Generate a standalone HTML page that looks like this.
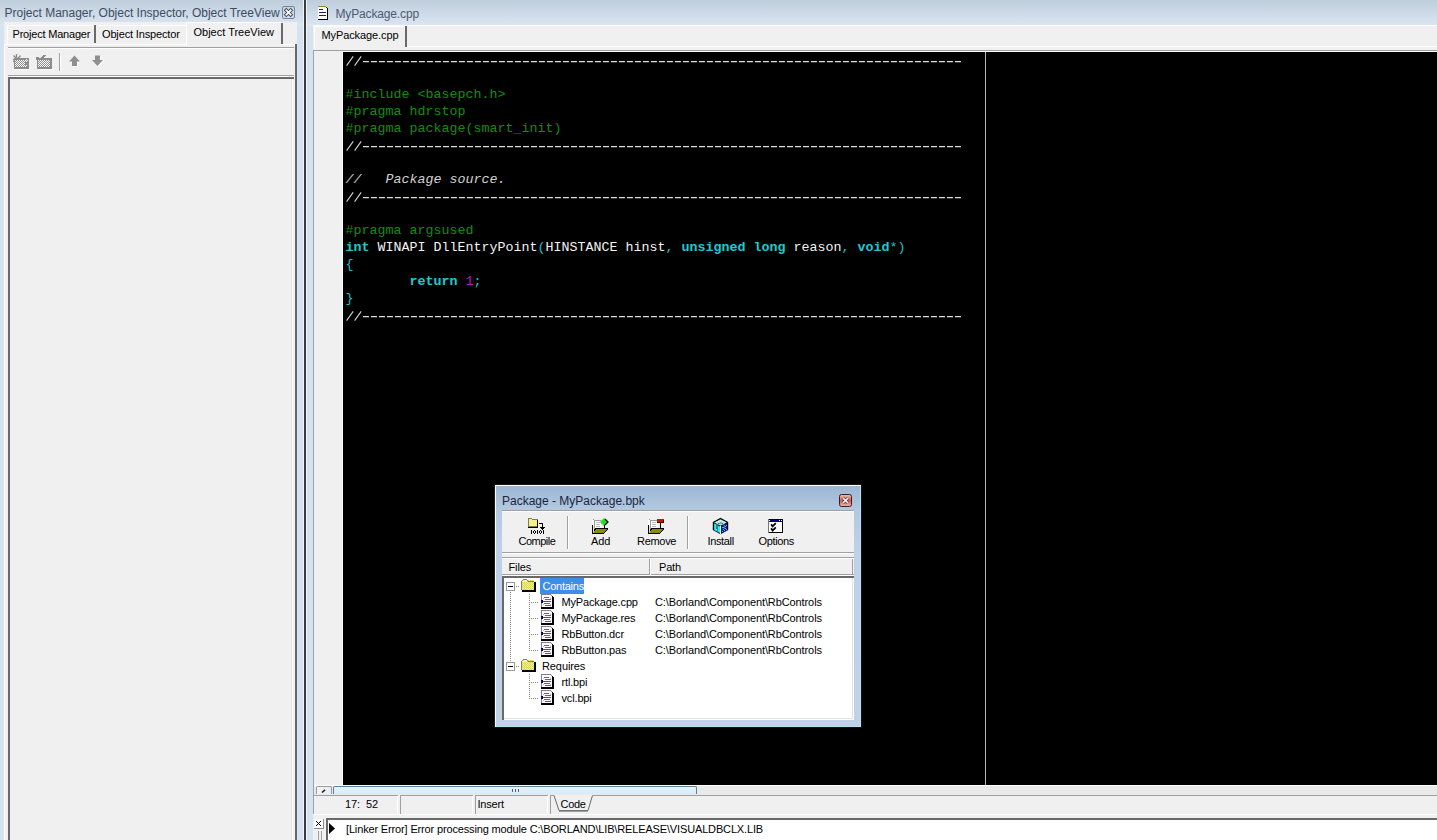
<!DOCTYPE html>
<html><head><meta charset="utf-8">
<style>
html,body{margin:0;padding:0}
body{width:1437px;height:840px;overflow:hidden;position:relative;background:#d5e2f0;font-family:"Liberation Sans",sans-serif;font-size:11px;color:#000}
.a{position:absolute}
svg.a{overflow:visible}
.t{position:absolute;white-space:pre;line-height:11px;height:11px}
.code{position:absolute;left:345.5px;top:52px;font-family:"Liberation Mono",monospace;font-size:13.333px;line-height:17px;white-space:pre;color:#c0c0c0}
.cm{font-style:italic;color:#d0d0d0}
.pp{color:#148c14}
.kw{color:#22c8d0;font-weight:bold}
.sy{color:#22c0c8}
.id{color:#f2f2f2}
.nm{color:#b020b8}
</style></head><body>
<div class="a" style="left:0px;top:0px;width:1437px;height:26px;background:linear-gradient(#bfcddc,#dbe6f2);"></div>
<div class="t" style="left:4.5px;top:7px;font-size:12px;line-height:12px;color:#3f4c61">Project Manager, Object Inspector, Object TreeView</div>
<svg class="a" style="left:282px;top:6px" width="13" height="13" viewBox="0 0 13 13">
<rect x="0.5" y="0.5" width="12" height="12" rx="1.5" fill="none" stroke="#76839a"/>
<path d="M4.3 4.3 L8.7 8.7 M8.7 4.3 L4.3 8.7" stroke="#3a4658" stroke-width="3.6" stroke-linecap="square"/>
<path d="M4.3 4.3 L8.7 8.7 M8.7 4.3 L4.3 8.7" stroke="#fff" stroke-width="1.7" stroke-linecap="square"/>
</svg>
<div class="a" style="left:4px;top:22px;width:293px;height:818px;background:#f0f0f0;"></div>
<div class="a" style="left:7px;top:25px;width:1px;height:19px;background:#fff;"></div>
<div class="a" style="left:7px;top:25px;width:88px;height:1px;background:#fff;"></div>
<div class="a" style="left:94px;top:25px;width:2px;height:18px;background:#696969;"></div>
<div class="t" style="left:12.5px;top:29px;letter-spacing:-0.2px">Project Manager</div>
<div class="a" style="left:98px;top:25px;width:88px;height:1px;background:#fff;"></div>
<div class="t" style="left:102px;top:29px;letter-spacing:-0.15px">Object Inspector</div>
<div class="a" style="left:186px;top:22px;width:1px;height:23px;background:#fff;"></div>
<div class="a" style="left:186px;top:22px;width:96px;height:1px;background:#fff;"></div>
<div class="a" style="left:281px;top:23px;width:2px;height:21px;background:#696969;"></div>
<div class="t" style="left:193.5px;top:27px;">Object TreeView</div>
<div class="a" style="left:4px;top:44px;width:182px;height:1px;background:#fff;"></div>
<div class="a" style="left:283px;top:44px;width:14px;height:1px;background:#fff;"></div>
<div class="a" style="left:4px;top:44px;width:1px;height:796px;background:#fff;"></div>
<div class="a" style="left:295px;top:44px;width:2px;height:796px;background:#696969;"></div>
<div class="a" style="left:8px;top:47px;width:286px;height:1px;background:#a0a0a0;"></div>
<div class="a" style="left:8px;top:48px;width:286px;height:1px;background:#fff;"></div>
<div class="a" style="left:8px;top:75px;width:286px;height:1px;background:#a0a0a0;"></div>
<div class="a" style="left:8px;top:76px;width:286px;height:1px;background:#fff;"></div>
<div class="a" style="left:59px;top:53px;width:1px;height:18px;background:#a0a0a0;"></div>
<div class="a" style="left:60px;top:53px;width:1px;height:18px;background:#fff;"></div>
<svg class="a" style="left:13px;top:54px" width="17" height="16" viewBox="0 0 17 16" shape-rendering="crispEdges">
<defs><pattern id="chk" width="2" height="2" patternUnits="userSpaceOnUse"><rect width="2" height="2" fill="#8c8c8c"/><rect x="0" y="0" width="1" height="1" fill="#fff"/><rect x="1" y="1" width="1" height="1" fill="#fff"/></pattern></defs>
<rect x="1" y="4" width="15" height="11" fill="#8c8c8c"/>
<rect x="2" y="6" width="10" height="7" fill="url(#chk)"/>
<rect x="12" y="5" width="3" height="3" fill="url(#chk)"/>
<rect x="13" y="11" width="1" height="1" fill="#fff"/><rect x="12" y="12" width="1" height="1" fill="#fff"/>
<path d="M0.5 1.5 L4 5 M7.5 1.5 L4.5 5 M3.5 0 V4 M0 5.5 H3 M0 7.5 H2" stroke="#8c8c8c" stroke-width="1.3" shape-rendering="auto"/>
<rect x="2" y="15" width="15" height="1" fill="#fff"/>
</svg>
<svg class="a" style="left:36px;top:54px" width="17" height="16" viewBox="0 0 17 16" shape-rendering="crispEdges">
<rect x="1" y="4" width="15" height="11" fill="#8c8c8c"/>
<rect x="2" y="6" width="12" height="7" fill="url(#chk)"/>
<rect x="0" y="3" width="3" height="3" fill="#8c8c8c"/>
<path d="M4 4l3-3h3l-3 3z" fill="#8c8c8c"/>
<rect x="2" y="15" width="15" height="1" fill="#fff"/>
</svg>
<svg class="a" style="left:68px;top:55px" width="14" height="13" viewBox="0 0 14 13">
<path d="M2 7.5 L7.5 1.5 L13 7.5 H10 V12 H5 V7.5 Z" fill="#fff"/>
<path d="M1 6.5 L6.5 0.5 L12 6.5 H9 V11 H4 V6.5 Z" fill="#8f8f8f"/>
</svg>
<svg class="a" style="left:91px;top:55px" width="14" height="13" viewBox="0 0 14 13">
<path d="M5 1.5 H10 V6 H13 L7.5 12 L2 6 H5 Z" fill="#fff"/>
<path d="M4 0.5 H9 V5 H12 L6.5 11 L1 5 H4 Z" fill="#8f8f8f"/>
</svg>
<div class="a" style="left:8px;top:77px;width:286px;height:2px;background:#696969;"></div>
<div class="a" style="left:8px;top:77px;width:2px;height:763px;background:#696969;"></div>
<div class="a" style="left:292px;top:79px;width:1px;height:761px;background:#fff;"></div>
<div class="a" style="left:291px;top:79px;width:1px;height:761px;background:#e3e3e3;"></div>
<div class="a" style="left:297px;top:26px;width:6px;height:814px;background:#d5e2f0;"></div>
<div class="a" style="left:303px;top:0px;width:1px;height:840px;background:#eef4fa;"></div>
<div class="a" style="left:304px;top:0px;width:2px;height:840px;background:#3c3c3c;"></div>
<div class="a" style="left:306px;top:0px;width:1px;height:840px;background:#eef4fa;"></div>
<svg class="a" style="left:318px;top:6px" width="11" height="15" viewBox="0 0 11 15" shape-rendering="crispEdges">
<rect x="0" y="0" width="9" height="13" fill="#fff"/>
<rect x="0" y="0" width="8" height="1" fill="#8a8a3a"/>
<rect x="8" y="1" width="1" height="1" fill="#000"/>
<rect x="9" y="2" width="1" height="12" fill="#000"/>
<rect x="0" y="13" width="10" height="1" fill="#000"/>
<rect x="1" y="3" width="4" height="1" fill="#1a1a70"/>
<rect x="1" y="6" width="7" height="1" fill="#1a1a70"/>
<rect x="1" y="9" width="7" height="1" fill="#1a1a70"/>
</svg>
<div class="t" style="left:335.5px;top:8px;font-size:12px;line-height:12px;color:#4d5a70;letter-spacing:-0.15px">MyPackage.cpp</div>
<div class="a" style="left:313px;top:25px;width:1124px;height:25px;background:#f0f0f0;"></div>
<div class="a" style="left:313px;top:25px;width:1124px;height:1px;background:#fbfcfd;"></div>
<div class="a" style="left:314px;top:26px;width:1px;height:22px;background:#fff;"></div>
<div class="a" style="left:314px;top:26px;width:91px;height:1px;background:#fff;"></div>
<div class="a" style="left:405px;top:26px;width:2px;height:21px;background:#696969;"></div>
<div class="a" style="left:407px;top:46px;width:1030px;height:1px;background:#fff;"></div>
<div class="t" style="left:321.5px;top:30px;letter-spacing:-0.1px">MyPackage.cpp</div>
<div class="a" style="left:313px;top:50px;width:1124px;height:1px;background:#a0a0a0;"></div>
<div class="a" style="left:313px;top:50px;width:1px;height:745px;background:#a0a0a0;"></div>
<div class="a" style="left:314px;top:51px;width:28px;height:734px;background:#f0f0f0;"></div>
<div class="a" style="left:342px;top:51px;width:1px;height:734px;background:#fff;"></div>
<div class="a" style="left:343px;top:51px;width:1094px;height:1px;background:#fff;"></div>
<div class="a" style="left:343px;top:52px;width:1094px;height:733px;background:#000;"></div>
<div class="a" style="left:985px;top:52px;width:1px;height:733px;background:#b4b4b4;"></div>
<div class="a" style="left:363px;top:61px;width:600px;height:1px;background:repeating-linear-gradient(90deg,#dcdcdc 0 6px,transparent 6px 8px)"></div>
<div class="a" style="left:363px;top:62px;width:600px;height:1px;background:repeating-linear-gradient(90deg,rgba(160,160,160,0.35) 0 6px,transparent 6px 8px)"></div>
<svg class="a" style="left:344px;top:55px" width="20" height="12" viewBox="0 0 20 12"><path d="M2.6 10.6 L9.2 1.4 M10.6 10.6 L17.2 1.4" stroke="#cfcfcf" stroke-width="1.15" fill="none"/></svg>
<div class="a" style="left:363px;top:146px;width:600px;height:1px;background:repeating-linear-gradient(90deg,#dcdcdc 0 6px,transparent 6px 8px)"></div>
<div class="a" style="left:363px;top:147px;width:600px;height:1px;background:repeating-linear-gradient(90deg,rgba(160,160,160,0.35) 0 6px,transparent 6px 8px)"></div>
<svg class="a" style="left:344px;top:140px" width="20" height="12" viewBox="0 0 20 12"><path d="M2.6 10.6 L9.2 1.4 M10.6 10.6 L17.2 1.4" stroke="#cfcfcf" stroke-width="1.15" fill="none"/></svg>
<div class="a" style="left:363px;top:197px;width:600px;height:1px;background:repeating-linear-gradient(90deg,#dcdcdc 0 6px,transparent 6px 8px)"></div>
<div class="a" style="left:363px;top:198px;width:600px;height:1px;background:repeating-linear-gradient(90deg,rgba(160,160,160,0.35) 0 6px,transparent 6px 8px)"></div>
<svg class="a" style="left:344px;top:191px" width="20" height="12" viewBox="0 0 20 12"><path d="M2.6 10.6 L9.2 1.4 M10.6 10.6 L17.2 1.4" stroke="#cfcfcf" stroke-width="1.15" fill="none"/></svg>
<div class="a" style="left:363px;top:316px;width:600px;height:1px;background:repeating-linear-gradient(90deg,#dcdcdc 0 6px,transparent 6px 8px)"></div>
<div class="a" style="left:363px;top:317px;width:600px;height:1px;background:repeating-linear-gradient(90deg,rgba(160,160,160,0.35) 0 6px,transparent 6px 8px)"></div>
<svg class="a" style="left:344px;top:310px" width="20" height="12" viewBox="0 0 20 12"><path d="M2.6 10.6 L9.2 1.4 M10.6 10.6 L17.2 1.4" stroke="#cfcfcf" stroke-width="1.15" fill="none"/></svg>
<div class="code"><span class="cm"></span>

<span class="pp">#include &lt;basepch.h&gt;</span>
<span class="pp">#pragma hdrstop</span>
<span class="pp">#pragma package(smart_init)</span>
<span class="cm"></span>

<span class="cm">//   Package source.</span>
<span class="cm"></span>

<span class="pp">#pragma argsused</span>
<span class="kw">int</span><span class="id"> WINAPI DllEntryPoint</span><span class="sy">(</span><span class="id">HINSTANCE hinst</span><span class="sy">, </span><span class="kw">unsigned long</span><span class="id"> reason</span><span class="sy">, </span><span class="kw">void</span><span class="sy">*)</span>
<span class="sy">{</span>
        <span class="kw">return</span> <span class="nm">1</span><span class="sy">;</span>
<span class="sy">}</span>
<span class="cm"></span>
</div>
<div class="a" style="left:314px;top:785px;width:1123px;height:1px;background:#fff;"></div>
<div class="a" style="left:314px;top:786px;width:1123px;height:9px;background:#e9e9e9;"></div>
<div class="a" style="left:316px;top:786px;width:16px;height:8px;border:1px solid #9a9a9a;border-bottom:none;border-radius:2px 2px 0 0;box-sizing:border-box;background:linear-gradient(90deg,#f2f2f2,#e6eef4)"></div>
<svg class="a" style="left:321px;top:789px" width="5" height="4"><path d="M1 3.5 L4 0.8" stroke="#222" stroke-width="1.6"/></svg>
<div class="a" style="left:333px;top:786px;width:364px;height:8px;border:1px solid #5f7f97;border-bottom:none;border-radius:2px 2px 0 0;box-sizing:border-box;background:linear-gradient(#e6f4fc,#d6ebf8)"></div>
<svg class="a" style="left:512px;top:789px" width="7" height="3" shape-rendering="crispEdges"><rect x="0" y="0" width="1" height="3" fill="#3a6a9a"/><rect x="3" y="0" width="1" height="3" fill="#3a6a9a"/><rect x="6" y="0" width="1" height="3" fill="#3a6a9a"/></svg>
<div class="a" style="left:313px;top:795px;width:1124px;height:23px;background:#f0f0f0;"></div>
<div class="a" style="left:313px;top:814px;width:1124px;height:1px;background:#fff;"></div>
<div class="a" style="left:313px;top:795px;width:85px;height:1px;background:#a0a0a0;"></div>
<div class="a" style="left:313px;top:795px;width:1px;height:19px;background:#a0a0a0;"></div>
<div class="a" style="left:397px;top:796px;width:1px;height:19px;background:#fff;"></div>
<div class="a" style="left:313px;top:814px;width:85px;height:1px;background:#fff;"></div>
<div class="a" style="left:400px;top:795px;width:73px;height:1px;background:#a0a0a0;"></div>
<div class="a" style="left:400px;top:795px;width:1px;height:19px;background:#a0a0a0;"></div>
<div class="a" style="left:472px;top:796px;width:1px;height:19px;background:#fff;"></div>
<div class="a" style="left:400px;top:814px;width:73px;height:1px;background:#fff;"></div>
<div class="a" style="left:475px;top:795px;width:73px;height:1px;background:#a0a0a0;"></div>
<div class="a" style="left:475px;top:795px;width:1px;height:19px;background:#a0a0a0;"></div>
<div class="a" style="left:547px;top:796px;width:1px;height:19px;background:#fff;"></div>
<div class="a" style="left:475px;top:814px;width:73px;height:1px;background:#fff;"></div>
<div class="a" style="left:398px;top:796px;width:2px;height:18px;background:#f0f0f0;"></div>
<div class="t" style="left:345px;top:799px;letter-spacing:-0.1px">17:  52</div>
<div class="t" style="left:477.5px;top:799px;letter-spacing:-0.2px">Insert</div>
<div class="a" style="left:550px;top:795px;width:1px;height:19px;background:#a0a0a0;"></div>
<svg class="a" style="left:550px;top:795px" width="887" height="20" viewBox="0 0 887 20">
<path d="M0.5 19 V0.5 H4" stroke="#a0a0a0" fill="none"/>
<path d="M4 0.5 L9 15.5 H38 L42.5 0.5" stroke="#6a6a6a" stroke-width="1" fill="#f0f0f0"/>
<path d="M9 16 H38" stroke="#7a7a7a" stroke-width="1.4"/>
<path d="M42 0.5 H887" stroke="#a0a0a0"/>
</svg>
<div class="t" style="left:560.5px;top:799px;letter-spacing:-0.3px">Code</div>
<div class="a" style="left:313px;top:815px;width:1124px;height:25px;background:#f0f0f0;"></div>
<div class="a" style="left:326px;top:818px;width:1111px;height:2px;background:#696969;"></div>
<div class="a" style="left:326px;top:818px;width:2px;height:22px;background:#696969;"></div>
<div class="a" style="left:328px;top:820px;width:1109px;height:20px;background:#fff;"></div>
<svg class="a" style="left:314px;top:819px" width="11" height="21" viewBox="0 0 11 21" shape-rendering="crispEdges">
<rect x="0" y="0" width="9" height="9" fill="#fff"/>
<rect x="9" y="0" width="1" height="10" fill="#8a8a8a"/>
<rect x="0" y="9" width="10" height="1" fill="#8a8a8a"/>
<path d="M2 2 L7 7 M7 2 L2 7" stroke="#000" stroke-width="1" shape-rendering="auto"/>
<rect x="4" y="12" width="1" height="9" fill="#a0a0a0"/>
<rect x="7" y="12" width="1" height="9" fill="#a0a0a0"/>
</svg>
<svg class="a" style="left:329px;top:823px" width="7" height="11"><path d="M0 0 L6 5.5 L0 11 Z" fill="#000"/></svg>
<div class="t" style="left:346px;top:824px;letter-spacing:-0.15px">[Linker Error] Error processing module C:\BORLAND\LIB\RELEASE\VISUALDBCLX.LIB</div>
<div class="a" style="left:494px;top:484px;width:368px;height:244px;background:#1a1a1a;"></div>
<div class="a" style="left:495px;top:485px;width:366px;height:242px;background:#fff;"></div>
<div class="a" style="left:496px;top:486px;width:364px;height:240px;background:linear-gradient(#9cb6d4 0px,#b3c9e1 24px,#bcd1e8 60px,#c0d2e8 100%);"></div>
<div class="a" style="left:496px;top:726px;width:365px;height:1px;background:#b8e0f0;"></div>
<div class="a" style="left:860px;top:486px;width:1px;height:241px;background:#b8e0f0;"></div>
<div class="a" style="left:861px;top:484px;width:1px;height:244px;background:#0a1418;"></div>
<div class="a" style="left:494px;top:727px;width:368px;height:1px;background:#0a1418;"></div>
<div class="t" style="left:502px;top:495px;font-size:12px;line-height:12px;color:#1b263c">Package - MyPackage.bpk</div>
<svg class="a" style="left:839px;top:494px" width="13" height="13" viewBox="0 0 13 13">
<defs><linearGradient id="cg" x1="0" y1="0" x2="0" y2="1"><stop offset="0" stop-color="#f2c0b8"/><stop offset="0.5" stop-color="#c8604e"/><stop offset="1" stop-color="#f0b8b0"/></linearGradient></defs>
<rect x="0.5" y="0.5" width="12" height="12" rx="2" fill="url(#cg)" stroke="#3a1c22"/>
<path d="M4.2 4.2 L8.8 8.8 M8.8 4.2 L4.2 8.8" stroke="#5a2a2a" stroke-width="3"/>
<path d="M4.2 4.2 L8.8 8.8 M8.8 4.2 L4.2 8.8" stroke="#fff" stroke-width="1.6"/>
</svg>
<div class="a" style="left:502px;top:510px;width:352px;height:48px;background:#f0f0f0;"></div>
<div class="a" style="left:502px;top:510px;width:352px;height:1px;background:#a0a0a0;"></div>
<div class="a" style="left:502px;top:511px;width:352px;height:1px;background:#fff;"></div>
<div class="a" style="left:502px;top:552px;width:352px;height:1px;background:#a0a0a0;"></div>
<div class="a" style="left:502px;top:553px;width:352px;height:1px;background:#fff;"></div>
<div class="a" style="left:502px;top:557px;width:352px;height:1px;background:#a0a0a0;"></div>
<div class="a" style="left:567px;top:516px;width:1px;height:33px;background:#a0a0a0;"></div>
<div class="a" style="left:568px;top:516px;width:1px;height:33px;background:#fff;"></div>
<div class="a" style="left:687px;top:516px;width:1px;height:33px;background:#a0a0a0;"></div>
<div class="a" style="left:688px;top:516px;width:1px;height:33px;background:#fff;"></div>
<div class="t" style="left:518.5px;top:536px;letter-spacing:-0.5px">Compile</div>
<div class="t" style="left:591px;top:536px;letter-spacing:-0.1px">Add</div>
<div class="t" style="left:637px;top:536px;letter-spacing:-0.3px">Remove</div>
<div class="t" style="left:707.5px;top:536px;letter-spacing:-0.35px">Install</div>
<div class="t" style="left:758.5px;top:536px;letter-spacing:-0.35px">Options</div>
<svg class="a" style="left:527px;top:517px" width="19" height="19" viewBox="0 0 19 19" shape-rendering="crispEdges">
<rect x="1" y="1" width="4" height="1" fill="#808040"/>
<rect x="1" y="2" width="10" height="8" fill="#808040"/>
<rect x="2" y="3" width="8" height="6" fill="#f2f28a"/>
<rect x="2" y="2" width="3" height="1" fill="#f2f28a"/>
<rect x="1" y="10" width="10" height="1" fill="#000"/>
<rect x="10" y="3" width="1" height="8" fill="#000"/>
<rect x="12" y="6" width="4" height="1" fill="#000"/>
<rect x="15" y="6" width="1" height="5" fill="#000"/>
<rect x="13" y="10" width="5" height="1" fill="#000"/>
<rect x="14" y="11" width="3" height="1" fill="#000"/>
<rect x="15" y="12" width="1" height="1" fill="#000"/>
<rect x="4" y="13" width="1.4" height="4" fill="#000"/><rect x="10" y="13" width="1.4" height="4" fill="#000"/><rect x="16" y="13" width="1.4" height="4" fill="#000"/><rect x="6" y="14" width="1" height="2" fill="#000"/><rect x="8" y="14" width="1" height="2" fill="#000"/><rect x="7" y="13" width="1" height="1" fill="#000"/><rect x="7" y="16" width="1" height="1" fill="#000"/><rect x="12" y="14" width="1" height="2" fill="#000"/><rect x="14" y="14" width="1" height="2" fill="#000"/><rect x="13" y="13" width="1" height="1" fill="#000"/><rect x="13" y="16" width="1" height="1" fill="#000"/>
</svg>
<svg class="a" style="left:588px;top:514px" width="22" height="21" viewBox="0 0 22 21" shape-rendering="crispEdges"><rect x="4" y="6" width="6" height="7" fill="#fff"/>
<rect x="5" y="5" width="1" height="1" fill="#999"/>
<rect x="6" y="6" width="7" height="1" fill="#999"/>
<rect x="6" y="6" width="1" height="9" fill="#999"/>
<rect x="7" y="7" width="6" height="7" fill="#fff"/>
<rect x="8" y="8" width="4" height="1" fill="#c0c0c0"/>
<rect x="8" y="10" width="4" height="1" fill="#c0c0c0"/>
<rect x="8" y="12" width="4" height="1" fill="#c0c0c0"/>
<path d="M4 11 H5 V19 H4 Z" fill="#000"/>
<path d="M5 11.5 H6 V18 H5 Z" fill="#f0f0b0"/>
<path d="M8 14 H20 V15 H8 Z" fill="#000"/>
<path d="M7 15 L20 15 L15.5 19.5 L5 19.5 Z" fill="#8c8c00" shape-rendering="auto"/>
<path d="M20 14 V16 L15.5 20 H4 V19 H15 L19 15 V14 Z" fill="#000"/>
<path d="M6 15 L8 14 V15 L6 17 Z" fill="#000"/>
<path d="M16 4 L20 8 L16 12 L12 8 Z" fill="#22e022" shape-rendering="auto"/>
<path d="M17 5 L20 8 L17 11" stroke="#000" fill="none" stroke-width="1.2" shape-rendering="auto"/>
<rect x="16" y="11" width="1" height="3" fill="#000"/>
</svg>
<svg class="a" style="left:644px;top:514px" width="22" height="21" viewBox="0 0 22 21" shape-rendering="crispEdges"><rect x="4" y="6" width="6" height="7" fill="#fff"/>
<rect x="5" y="5" width="1" height="1" fill="#999"/>
<rect x="6" y="6" width="7" height="1" fill="#999"/>
<rect x="6" y="6" width="1" height="9" fill="#999"/>
<rect x="7" y="7" width="6" height="7" fill="#fff"/>
<rect x="8" y="8" width="4" height="1" fill="#c0c0c0"/>
<rect x="8" y="10" width="4" height="1" fill="#c0c0c0"/>
<rect x="8" y="12" width="4" height="1" fill="#c0c0c0"/>
<path d="M4 11 H5 V19 H4 Z" fill="#000"/>
<path d="M5 11.5 H6 V18 H5 Z" fill="#f0f0b0"/>
<path d="M8 14 H20 V15 H8 Z" fill="#000"/>
<path d="M7 15 L20 15 L15.5 19.5 L5 19.5 Z" fill="#8c8c00" shape-rendering="auto"/>
<path d="M20 14 V16 L15.5 20 H4 V19 H15 L19 15 V14 Z" fill="#000"/>
<path d="M6 15 L8 14 V15 L6 17 Z" fill="#000"/>
<rect x="13" y="5" width="7" height="3" rx="1" fill="#cc1010"/>
<rect x="13" y="8" width="7" height="1" fill="#500"/>
<rect x="19" y="6" width="1" height="2" fill="#300"/>
<rect x="16" y="9" width="1" height="5" fill="#000"/>
</svg>
<svg class="a" style="left:712px;top:517px" width="17" height="18" viewBox="0 0 17 18">
<path d="M8.5 0.8 L16.2 4.9 V13.1 L8.5 17.2 L0.8 13.1 V4.9 Z" fill="#000"/>
<path d="M8.5 2.2 L14.8 5.5 L8.5 8.8 L2.2 5.5 Z" fill="#9eeef0"/>
<path d="M2.1 6.3 L8 9.4 V16 L2.1 12.9 Z" fill="#22eef8"/>
<path d="M9 9.4 L14.9 6.3 V12.9 L9 16 Z" fill="#0c1ea8"/>
<g shape-rendering="crispEdges"><rect x="10" y="10" width="1" height="1" fill="#60b0ff"/><rect x="12" y="9" width="1" height="1" fill="#60b0ff"/><rect x="14" y="8" width="1" height="1" fill="#60b0ff"/><rect x="11" y="12" width="1" height="1" fill="#60b0ff"/><rect x="13" y="11" width="1" height="1" fill="#60b0ff"/><rect x="10" y="14" width="1" height="1" fill="#60b0ff"/><rect x="12" y="13" width="1" height="1" fill="#60b0ff"/><rect x="14" y="12" width="1" height="1" fill="#60b0ff"/><rect x="11" y="10" width="1" height="1" fill="#60b0ff"/><rect x="13" y="9" width="1" height="1" fill="#60b0ff"/><rect x="6" y="4" width="1" height="1" fill="#ffffff"/><rect x="8" y="3" width="1" height="1" fill="#ffffff"/><rect x="10" y="4" width="1" height="1" fill="#ffffff"/><rect x="12" y="5" width="1" height="1" fill="#ffffff"/><rect x="5" y="6" width="1" height="1" fill="#ffffff"/><rect x="7" y="5" width="1" height="1" fill="#ffffff"/><rect x="9" y="6" width="1" height="1" fill="#ffffff"/><rect x="11" y="6" width="1" height="1" fill="#ffffff"/><rect x="4" y="5" width="1" height="1" fill="#ffffff"/>
<rect x="8" y="9" width="1" height="8" fill="#d8ffff"/>
<rect x="5" y="8" width="1" height="7" fill="#108c94"/>
</g>
<path d="M4.6 12 V8.2 Q8.5 3.8 12.4 8.2 V12" stroke="#8c5a62" stroke-width="1.1" fill="none"/>
</svg>
<svg class="a" style="left:768px;top:519px" width="16" height="15" viewBox="0 0 16 15" shape-rendering="crispEdges">
<rect x="0" y="0" width="15" height="14" fill="#000"/>
<rect x="0" y="0" width="1" height="14" fill="#777"/>
<rect x="1" y="1" width="13" height="2" fill="#000080"/>
<rect x="1" y="1" width="1" height="1" fill="#fff"/>
<rect x="11" y="1" width="1" height="1" fill="#fff"/>
<rect x="13" y="1" width="1" height="1" fill="#fff"/>
<rect x="1" y="3" width="13" height="10" fill="#fff"/>
<path d="M3.2 5.3 L4.6 7.4 L7.8 4.2 M3.2 9.3 L4.6 11.6 L7.8 8.3" stroke="#000" stroke-width="1.8" fill="none" shape-rendering="auto"/>
</svg>
<div class="a" style="left:502px;top:558px;width:352px;height:19px;background:#f0f0f0;"></div>
<div class="a" style="left:502px;top:558px;width:352px;height:1px;background:#fff;"></div>
<div class="a" style="left:502px;top:574px;width:352px;height:1px;background:#a0a0a0;"></div>
<div class="a" style="left:502px;top:575px;width:352px;height:1px;background:#fff;"></div>
<div class="a" style="left:649px;top:559px;width:1px;height:16px;background:#a0a0a0;"></div>
<div class="a" style="left:650px;top:559px;width:1px;height:16px;background:#fff;"></div>
<div class="a" style="left:852px;top:559px;width:1px;height:16px;background:#a0a0a0;"></div>
<div class="t" style="left:508.5px;top:562px;letter-spacing:-0.1px">Files</div>
<div class="t" style="left:659px;top:562px;letter-spacing:-0.2px">Path</div>
<div class="a" style="left:502px;top:576px;width:352px;height:2px;background:#696969;"></div>
<div class="a" style="left:502px;top:576px;width:2px;height:144px;background:#696969;"></div>
<div class="a" style="left:504px;top:578px;width:350px;height:142px;background:#fff;"></div>
<div class="a" style="left:852px;top:578px;width:1px;height:141px;background:#e2e2e2;"></div>
<div class="a" style="left:504px;top:718px;width:349px;height:1px;background:#e2e2e2;"></div>
<div class="a" style="left:540px;top:578px;width:44px;height:16px;background:#3d8ee8;"></div>
<div class="t" style="left:542.5px;top:581px;color:#fff;letter-spacing:-0.25px">Contains</div>
<div class="t" style="left:561.5px;top:597px;letter-spacing:-0.15px">MyPackage.cpp</div>
<div class="t" style="left:655px;top:597px;letter-spacing:-0.1px">C:\Borland\Component\RbControls</div>
<div class="t" style="left:561.5px;top:613px;letter-spacing:-0.15px">MyPackage.res</div>
<div class="t" style="left:655px;top:613px;letter-spacing:-0.1px">C:\Borland\Component\RbControls</div>
<div class="t" style="left:561.5px;top:629px;letter-spacing:-0.15px">RbButton.dcr</div>
<div class="t" style="left:655px;top:629px;letter-spacing:-0.1px">C:\Borland\Component\RbControls</div>
<div class="t" style="left:561.5px;top:645px;letter-spacing:-0.15px">RbButton.pas</div>
<div class="t" style="left:655px;top:645px;letter-spacing:-0.1px">C:\Borland\Component\RbControls</div>
<div class="t" style="left:561.5px;top:677px;letter-spacing:-0.15px">rtl.bpi</div>
<div class="t" style="left:561.5px;top:693px;letter-spacing:-0.15px">vcl.bpi</div>
<div class="t" style="left:542px;top:661px;letter-spacing:-0.1px">Requires</div>
<div class="a" style="left:506px;top:582px;width:9px;height:9px;border:1px solid #999;box-sizing:border-box;background:#fff"></div>
<div class="a" style="left:508px;top:586px;width:5px;height:1px;background:#000;"></div>
<div class="a" style="left:506px;top:662px;width:9px;height:9px;border:1px solid #999;box-sizing:border-box;background:#fff"></div>
<div class="a" style="left:508px;top:666px;width:5px;height:1px;background:#000;"></div>
<div class="a" style="left:516px;top:586px;width:4px;height:1px;background:repeating-linear-gradient(90deg,#8a8a8a 0 1px,transparent 1px 2px)"></div>
<div class="a" style="left:516px;top:666px;width:4px;height:1px;background:repeating-linear-gradient(90deg,#8a8a8a 0 1px,transparent 1px 2px)"></div>
<div class="a" style="left:510px;top:592px;width:1px;height:70px;background:repeating-linear-gradient(#8a8a8a 0 1px,transparent 1px 2px)"></div>
<div class="a" style="left:529px;top:594px;width:1px;height:57px;background:repeating-linear-gradient(#8a8a8a 0 1px,transparent 1px 2px)"></div>
<div class="a" style="left:529px;top:674px;width:1px;height:25px;background:repeating-linear-gradient(#8a8a8a 0 1px,transparent 1px 2px)"></div>
<div class="a" style="left:531px;top:602px;width:8px;height:1px;background:repeating-linear-gradient(90deg,#8a8a8a 0 1px,transparent 1px 2px)"></div>
<div class="a" style="left:531px;top:618px;width:8px;height:1px;background:repeating-linear-gradient(90deg,#8a8a8a 0 1px,transparent 1px 2px)"></div>
<div class="a" style="left:531px;top:634px;width:8px;height:1px;background:repeating-linear-gradient(90deg,#8a8a8a 0 1px,transparent 1px 2px)"></div>
<div class="a" style="left:531px;top:650px;width:8px;height:1px;background:repeating-linear-gradient(90deg,#8a8a8a 0 1px,transparent 1px 2px)"></div>
<div class="a" style="left:531px;top:682px;width:8px;height:1px;background:repeating-linear-gradient(90deg,#8a8a8a 0 1px,transparent 1px 2px)"></div>
<div class="a" style="left:531px;top:698px;width:8px;height:1px;background:repeating-linear-gradient(90deg,#8a8a8a 0 1px,transparent 1px 2px)"></div>
<svg class="a" style="left:521px;top:579px" width="15" height="13" viewBox="0 0 15 13" shape-rendering="crispEdges">
<defs><pattern id="yd579" width="2" height="2" patternUnits="userSpaceOnUse"><rect width="2" height="2" fill="#f0f08c"/><rect width="1" height="1" fill="#d8d858"/><rect x="1" y="1" width="1" height="1" fill="#d8d858"/></pattern></defs>
<rect x="1" y="1" width="12" height="10" fill="url(#yd579)"/>
<rect x="1" y="1" width="5" height="2" fill="#f6f6b0"/>
<rect x="2" y="0" width="4" height="1" fill="#808060"/>
<rect x="1" y="1" width="1" height="1" fill="#808060"/>
<rect x="6" y="1" width="1" height="1" fill="#808060"/>
<rect x="0" y="2" width="1" height="9" fill="#808060"/>
<rect x="7" y="2" width="6" height="1" fill="#808060"/>
<rect x="13" y="3" width="2" height="10" fill="#000"/>
<rect x="1" y="11" width="14" height="2" fill="#000"/>
</svg>
<svg class="a" style="left:521px;top:659px" width="15" height="13" viewBox="0 0 15 13" shape-rendering="crispEdges">
<defs><pattern id="yd659" width="2" height="2" patternUnits="userSpaceOnUse"><rect width="2" height="2" fill="#f0f08c"/><rect width="1" height="1" fill="#d8d858"/><rect x="1" y="1" width="1" height="1" fill="#d8d858"/></pattern></defs>
<rect x="1" y="1" width="12" height="10" fill="url(#yd659)"/>
<rect x="1" y="1" width="5" height="2" fill="#f6f6b0"/>
<rect x="2" y="0" width="4" height="1" fill="#808060"/>
<rect x="1" y="1" width="1" height="1" fill="#808060"/>
<rect x="6" y="1" width="1" height="1" fill="#808060"/>
<rect x="0" y="2" width="1" height="9" fill="#808060"/>
<rect x="7" y="2" width="6" height="1" fill="#808060"/>
<rect x="13" y="3" width="2" height="10" fill="#000"/>
<rect x="1" y="11" width="14" height="2" fill="#000"/>
</svg>
<svg class="a" style="left:541px;top:594px" width="14" height="15" viewBox="0 0 14 15" shape-rendering="crispEdges">
<rect x="0" y="0" width="11" height="14" fill="#fff"/>
<rect x="0" y="0" width="1" height="14" fill="#808080"/>
<rect x="0" y="0" width="10" height="1" fill="#808080"/>
<rect x="10" y="1" width="1" height="1" fill="#808080"/>
<rect x="11" y="2" width="1" height="1" fill="#000"/>
<rect x="11" y="3" width="2" height="11" fill="#000"/>
<rect x="0" y="13" width="13" height="2" fill="#000"/>
<rect x="3" y="3" width="5" height="1" fill="#208888"/>
<rect x="4" y="5" width="6" height="1" fill="#208888"/>
<rect x="2" y="7" width="8" height="1" fill="#d82020"/>
<rect x="0" y="6" width="2" height="3" fill="#000080"/>
<rect x="3" y="9" width="6" height="1" fill="#208888"/>
<rect x="4" y="11" width="6" height="1" fill="#208888"/>
<rect x="2" y="4" width="1" height="1" fill="#c0c0c0"/><rect x="9" y="4" width="1" height="1" fill="#c0c0c0"/>
<rect x="2" y="10" width="1" height="1" fill="#c0c0c0"/><rect x="9" y="10" width="1" height="1" fill="#c0c0c0"/>
</svg>
<svg class="a" style="left:541px;top:610px" width="14" height="15" viewBox="0 0 14 15" shape-rendering="crispEdges">
<rect x="0" y="0" width="11" height="14" fill="#fff"/>
<rect x="0" y="0" width="1" height="14" fill="#808080"/>
<rect x="0" y="0" width="10" height="1" fill="#808080"/>
<rect x="10" y="1" width="1" height="1" fill="#808080"/>
<rect x="11" y="2" width="1" height="1" fill="#000"/>
<rect x="11" y="3" width="2" height="11" fill="#000"/>
<rect x="0" y="13" width="13" height="2" fill="#000"/>
<rect x="3" y="3" width="5" height="1" fill="#208888"/>
<rect x="4" y="5" width="6" height="1" fill="#208888"/>
<rect x="2" y="7" width="8" height="1" fill="#d82020"/>
<rect x="0" y="6" width="2" height="3" fill="#000080"/>
<rect x="3" y="9" width="6" height="1" fill="#208888"/>
<rect x="4" y="11" width="6" height="1" fill="#208888"/>
<rect x="2" y="4" width="1" height="1" fill="#c0c0c0"/><rect x="9" y="4" width="1" height="1" fill="#c0c0c0"/>
<rect x="2" y="10" width="1" height="1" fill="#c0c0c0"/><rect x="9" y="10" width="1" height="1" fill="#c0c0c0"/>
</svg>
<svg class="a" style="left:541px;top:626px" width="14" height="15" viewBox="0 0 14 15" shape-rendering="crispEdges">
<rect x="0" y="0" width="11" height="14" fill="#fff"/>
<rect x="0" y="0" width="1" height="14" fill="#808080"/>
<rect x="0" y="0" width="10" height="1" fill="#808080"/>
<rect x="10" y="1" width="1" height="1" fill="#808080"/>
<rect x="11" y="2" width="1" height="1" fill="#000"/>
<rect x="11" y="3" width="2" height="11" fill="#000"/>
<rect x="0" y="13" width="13" height="2" fill="#000"/>
<rect x="3" y="3" width="5" height="1" fill="#208888"/>
<rect x="4" y="5" width="6" height="1" fill="#208888"/>
<rect x="2" y="7" width="8" height="1" fill="#d82020"/>
<rect x="0" y="6" width="2" height="3" fill="#000080"/>
<rect x="3" y="9" width="6" height="1" fill="#208888"/>
<rect x="4" y="11" width="6" height="1" fill="#208888"/>
<rect x="2" y="4" width="1" height="1" fill="#c0c0c0"/><rect x="9" y="4" width="1" height="1" fill="#c0c0c0"/>
<rect x="2" y="10" width="1" height="1" fill="#c0c0c0"/><rect x="9" y="10" width="1" height="1" fill="#c0c0c0"/>
</svg>
<svg class="a" style="left:541px;top:642px" width="14" height="15" viewBox="0 0 14 15" shape-rendering="crispEdges">
<rect x="0" y="0" width="11" height="14" fill="#fff"/>
<rect x="0" y="0" width="1" height="14" fill="#808080"/>
<rect x="0" y="0" width="10" height="1" fill="#808080"/>
<rect x="10" y="1" width="1" height="1" fill="#808080"/>
<rect x="11" y="2" width="1" height="1" fill="#000"/>
<rect x="11" y="3" width="2" height="11" fill="#000"/>
<rect x="0" y="13" width="13" height="2" fill="#000"/>
<rect x="3" y="3" width="5" height="1" fill="#208888"/>
<rect x="4" y="5" width="6" height="1" fill="#208888"/>
<rect x="2" y="7" width="8" height="1" fill="#d82020"/>
<rect x="0" y="6" width="2" height="3" fill="#000080"/>
<rect x="3" y="9" width="6" height="1" fill="#208888"/>
<rect x="4" y="11" width="6" height="1" fill="#208888"/>
<rect x="2" y="4" width="1" height="1" fill="#c0c0c0"/><rect x="9" y="4" width="1" height="1" fill="#c0c0c0"/>
<rect x="2" y="10" width="1" height="1" fill="#c0c0c0"/><rect x="9" y="10" width="1" height="1" fill="#c0c0c0"/>
</svg>
<svg class="a" style="left:541px;top:674px" width="14" height="15" viewBox="0 0 14 15" shape-rendering="crispEdges">
<rect x="0" y="0" width="11" height="14" fill="#fff"/>
<rect x="0" y="0" width="1" height="14" fill="#808080"/>
<rect x="0" y="0" width="10" height="1" fill="#808080"/>
<rect x="10" y="1" width="1" height="1" fill="#808080"/>
<rect x="11" y="2" width="1" height="1" fill="#000"/>
<rect x="11" y="3" width="2" height="11" fill="#000"/>
<rect x="0" y="13" width="13" height="2" fill="#000"/>
<rect x="3" y="3" width="5" height="1" fill="#208888"/>
<rect x="4" y="5" width="6" height="1" fill="#208888"/>
<rect x="2" y="7" width="8" height="1" fill="#d82020"/>
<rect x="0" y="6" width="2" height="3" fill="#000080"/>
<rect x="3" y="9" width="6" height="1" fill="#208888"/>
<rect x="4" y="11" width="6" height="1" fill="#208888"/>
<rect x="2" y="4" width="1" height="1" fill="#c0c0c0"/><rect x="9" y="4" width="1" height="1" fill="#c0c0c0"/>
<rect x="2" y="10" width="1" height="1" fill="#c0c0c0"/><rect x="9" y="10" width="1" height="1" fill="#c0c0c0"/>
</svg>
<svg class="a" style="left:541px;top:690px" width="14" height="15" viewBox="0 0 14 15" shape-rendering="crispEdges">
<rect x="0" y="0" width="11" height="14" fill="#fff"/>
<rect x="0" y="0" width="1" height="14" fill="#808080"/>
<rect x="0" y="0" width="10" height="1" fill="#808080"/>
<rect x="10" y="1" width="1" height="1" fill="#808080"/>
<rect x="11" y="2" width="1" height="1" fill="#000"/>
<rect x="11" y="3" width="2" height="11" fill="#000"/>
<rect x="0" y="13" width="13" height="2" fill="#000"/>
<rect x="3" y="3" width="5" height="1" fill="#208888"/>
<rect x="4" y="5" width="6" height="1" fill="#208888"/>
<rect x="2" y="7" width="8" height="1" fill="#d82020"/>
<rect x="0" y="6" width="2" height="3" fill="#000080"/>
<rect x="3" y="9" width="6" height="1" fill="#208888"/>
<rect x="4" y="11" width="6" height="1" fill="#208888"/>
<rect x="2" y="4" width="1" height="1" fill="#c0c0c0"/><rect x="9" y="4" width="1" height="1" fill="#c0c0c0"/>
<rect x="2" y="10" width="1" height="1" fill="#c0c0c0"/><rect x="9" y="10" width="1" height="1" fill="#c0c0c0"/>
</svg>
</body></html>
